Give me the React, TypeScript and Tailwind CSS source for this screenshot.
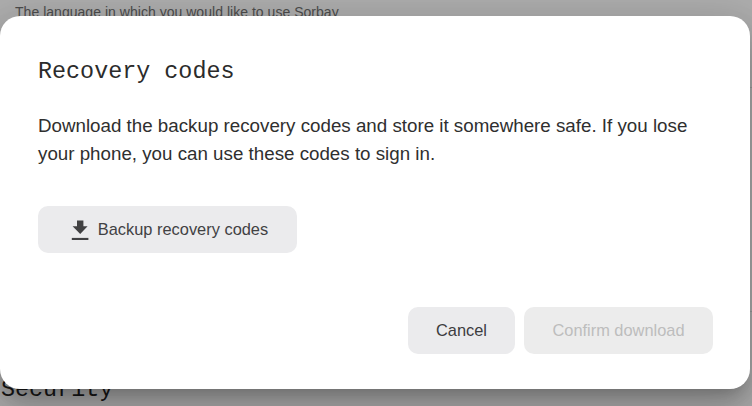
import type { ReactNode } from 'react';

function DownloadIcon() {
  return (
    <svg className="h-5 w-[18px] shrink-0" viewBox="0 0 18 20" fill="currentColor" aria-hidden="true">
      <path d="M6 .5h6.4v5.7h4.2L9.2 14 1.6 6.2H6z" />
      <path d="M.8 17.9h16.6v2.1H.8z" />
    </svg>
  );
}

function Button({ children, className, disabled }: { children: ReactNode; className: string; disabled?: boolean }) {
  return (
    <button
      type="button"
      disabled={disabled}
      className={`flex h-[47px] items-center justify-center rounded-[10px] text-[16.4px] whitespace-nowrap ${className}`}
    >
      {children}
    </button>
  );
}

export default function App() {
  return (
    <div className="relative h-[406px] w-[752px] overflow-hidden bg-[#adadad] font-['Liberation_Sans',Arial,sans-serif]">
      <div className="flex h-full flex-col">
        <p className="pt-1 pl-[15px] text-[14px] leading-4 tracking-[0.03px] text-[#4c4c4c]">
          The language in which you would like to use Sorbay
        </p>
        <div className="mt-[67px] h-[225px] w-full border-y border-[#9a9a9a]" />
        <h2 className="mt-auto pl-px font-['Liberation_Mono',monospace] text-[23.4px] leading-8 text-[#171717]">Security</h2>
      </div>

      <div
        role="dialog"
        className="absolute top-4 left-0 flex h-[373px] w-[750px] flex-col rounded-[20px] bg-white pt-10 pr-[37px] pb-[35px] pl-[38px] shadow-[0_11px_15px_-7px_rgba(0,0,0,0.2),0_24px_38px_3px_rgba(0,0,0,0.14),0_9px_46px_8px_rgba(0,0,0,0.12)]"
      >
        <h1 className="font-['Liberation_Mono',monospace] text-[23.4px] leading-8 text-[#2b2b2b]">Recovery codes</h1>
        <p className="mt-6 text-[18.75px] leading-7 whitespace-nowrap text-[#2f2f2f]">
          Download the backup recovery codes and store it somewhere safe. If you lose
          <br />
          your phone, you can use these codes to sign in.
        </p>
        <Button className="mt-[38px] w-[259px] gap-[9px] bg-[#ebebed] pl-1 text-[#414143]">
          <DownloadIcon />
          Backup recovery codes
        </Button>
        <div className="mt-auto flex justify-end gap-[9px]">
          <Button className="w-[107px] bg-[#ebebed] text-[#3c3c3f]">Cancel</Button>
          <Button disabled className="w-[189px] bg-[#ececec] text-[#bdbdbd]">
            Confirm download
          </Button>
        </div>
      </div>
    </div>
  );
}
